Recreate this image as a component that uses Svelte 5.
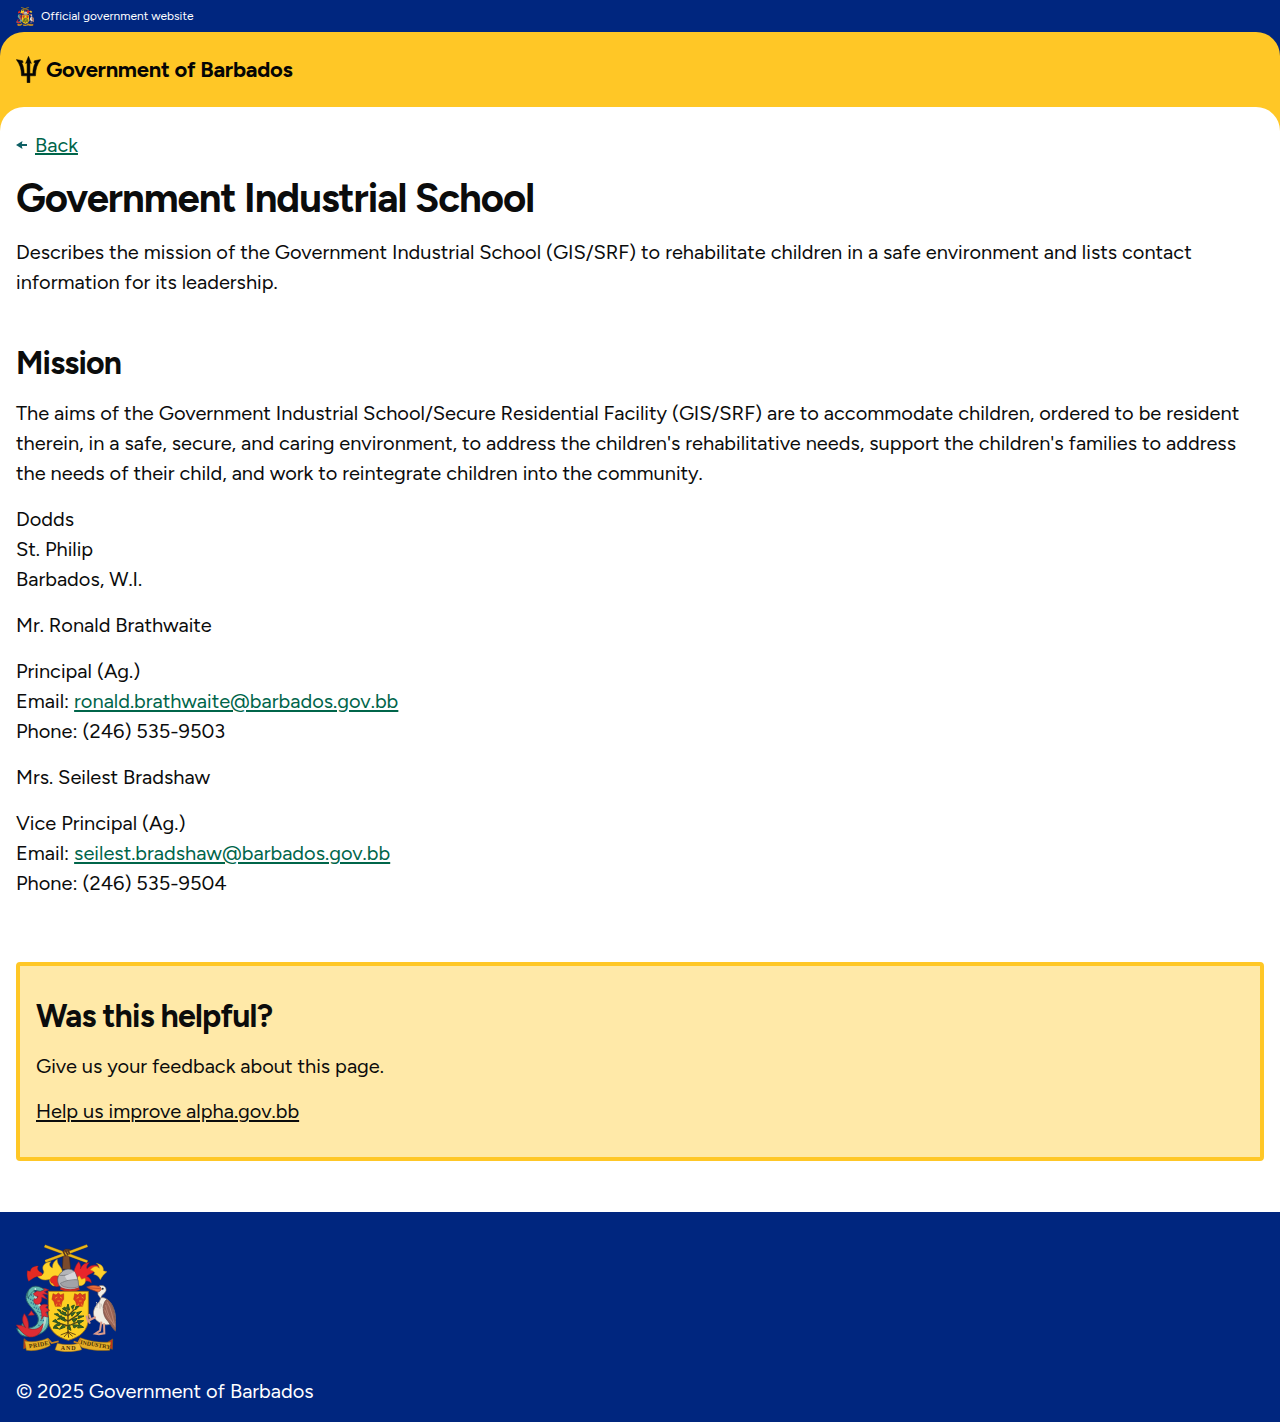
<script>
  const people = [
    {
      name: 'Mr. Ronald Brathwaite',
      role: 'Principal (Ag.)',
      email: 'ronald.brathwaite@barbados.gov.bb',
      phone: '(246) 535-9503',
    },
    {
      name: 'Mrs. Seilest Bradshaw',
      role: 'Vice Principal (Ag.)',
      email: 'seilest.bradshaw@barbados.gov.bb',
      phone: '(246) 535-9504',
    },
  ];
</script>

{#snippet crest(size)}
  <svg class="crest {size}" viewBox="24 24 300 324" preserveAspectRatio="none" role="img" aria-label="Coat of arms of Barbados">
    <!-- crossed sugar canes held by a raised arm -->
    <path d="M165 62c-3-12 0-21 9-23l12 1c4 9 2 17-2 22l4 38h-25z" fill="#7a4a2c" stroke="#3d2415" stroke-width="2" />
    <path d="M110 30l128 47M112 76l126-47" stroke="#8f6a10" stroke-width="9" />
    <path d="M110 30l128 47M112 76l126-47" stroke="#e9b71c" stroke-width="6.500" />
    <path d="M165 45l8 16M172 42l8 16M180 42l5 13" stroke="#5b3620" stroke-width="5" />
    <!-- mantling -->
    <path d="M158 141c-13 17-36 9-33-11-16 5-31 1-40-14 15 4 25-1 22-11-8-14 3-27 22-28-8 7-4 16 5 19-2-11 5-21 14-26-2 13 9 20 13 30 6 14 4 30-3 41z" fill="#ffd329" stroke="#b88812" stroke-width="1.500" />
    <path d="M62 136c-6-12-5-23-4-32l9 2c1-9 8-16 24-16-6 8-1 15 9 20 6 4 3 9-4 10-13 1-21 6-34 16zM126 131c4-12 16-14 24-10l8 26c-11 10-22 3-23-5-5 1-8-5-9-11z" fill="#e52a22" stroke="#9b1716" stroke-width="1" />
    <path d="M197 111c3-16 8-26 15-34 6 8 7 15 5 22 6-13 13-19 27-19-8 8-9 13-7 18 10-11 24-13 36-8-9 5-8 15-19 20-8 4-15 7-18 11 8 3 14 10 14 20-9-7-15-8-22-2-7 9-16 8-20-1z" fill="#e9252b" stroke="#9d1720" stroke-width="1.500" />
    <path d="M247 102c8-11 19-14 27-5-1-6-3-11-9-15 16 3 23 12 21 22l11 3c-8 6-15 14-20 24-5-9-10-14-20-16 4-5 5-8-10-13zM206 145c-2-15 3-24 8-26l7 11 10-4c5 12-3 25-17 23z" fill="#ffd02a" stroke="#b88812" stroke-width="1.300" />
    <!-- helmet -->
    <path d="M153 148c-9-18-2-31 8-40 16-15 36-9 42 5 9 16 6 32 10 42-17 10-35 9-49 5z" fill="#b4b5b9" stroke="#55565d" stroke-width="2" />
    <path d="M155 118c17 2 31-1 46-8M157 142c18-9 33-13 53-10l2 20c-19 6-33 4-49-2z" fill="#a2a3a8" stroke="#6f7076" stroke-width="2" />
    <path d="M170 120l30-13 7 21-30 4z" fill="#d7d7da" />
    <path d="M157 157c19 8 40 8 57 1" fill="none" stroke="#c62722" stroke-width="7" />
    <!-- shield -->
    <path d="M121 166h120v81c0 36-24 56-60 66-36-10-60-30-60-66z" fill="#fcd022" stroke="#a9730c" stroke-width="2.500" />
    <path d="M135 173l9 4 7-6 7 6 9-4v17l-5 7-3 14h-17l-4-14-6-7zM200 173l9 4 7-6 7 6 9-4v17l-5 7-3 14h-17l-4-14-6-7z" fill="#dc3b1f" stroke="#a8330f" stroke-width="1.500" />
    <path d="M141 187l7-4M156 183l6 4M148 195h8M206 187l7-4M221 183l6 4M213 195h8" stroke="#f2a91e" stroke-width="2.500" />
    <path d="M147 203l-4 9M155 203l5 9M212 203l-4 9M220 203l4 9" stroke="#ef8d18" stroke-width="3" />
    <!-- bearded fig tree -->
    <path d="M180 214v78M180 270l-31-10M180 256l-26-17M180 241l-18-16M180 270l34-14M180 256l31-20M180 240l20-20" fill="none" stroke="#504318" stroke-width="4" />
    <path d="M180 288l-22 9M180 289l-12 14M180 289l2 16M180 289l14 12M180 287l23 9" fill="none" stroke="#4a2b10" stroke-width="2.500" />
    <path d="M180 204l-5 14 10 4zM171 213l-8 5 14 9zM190 211l9-4-5 13zM203 212l10-1-11 11zM157 222l-9-1 13 12zM150 233l-11 1 16 9zM160 239l-12 11 17-2zM143 250l-9 6 17 5zM153 258l-16 14 20-5zM144 271l-9 5 17 2zM165 266l-11 14 18-7zM188 233l14-5-10 13zM206 230l15-4-12 12zM211 240l17 0-17 8zM192 250l16-3-10 13zM208 254l19 0-15 10zM194 266l18 2-14 8zM213 265l14 9-18 2zM168 243l-9 7 13 6zM173 229l-15 3 15 7zM184 266l5 17-11-6z" fill="#376129" stroke="#2c531f" stroke-width="3" stroke-linejoin="round" />
    <!-- dolphin supporter -->
    <path d="M74 154c-19 10-25 30-15 46 10 17 31 31 32 48 1 21-18 30-38 28l-10-14c-3 7-2 13 0 19l-17-4c6 17 17 26 37 24 35-2 63-18 59-53-3-30-35-40-31-60z" fill="#67bcb3" stroke="#28646b" stroke-width="3" />
    <path d="M82 178c-2 25 29 39 30 68 0 19-11 37-32 43" fill="none" stroke="#b9d6cd" stroke-width="7" />
    <path d="M63 172l14 9M60 186l16 8M68 200l16 7M77 213l16 7M88 225l13 7M97 238l15 4M97 253l14 1M91 267l12 5" stroke="#336e91" stroke-width="4" stroke-dasharray="4 3" />
    <path d="M86 166c10-9 22-12 36-4l-13 5 11 8-16-1 14 16-17-6c2 13-5 22-15 21-8-2-11-9-7-17 6 3 9 0 11-7-7 0-11-2-14-8zM95 213c6-9 15-10 26-5l-8 6 12 9-12 6 7 14-14-3-5 10c2-12 0-25-6-37zM70 224l-9 14 18-1z" fill="#e32d35" stroke="#93202d" stroke-width="2" />
    <path d="M60 186c-4-17 2-29 14-34 10-4 26 0 35 9l-12 5-17-3c-8 3-12 12-20 23z" fill="#5fb6ad" stroke="#254f59" stroke-width="2" />
    <circle cx="82" cy="159" r="2.500" fill="#fff" />
    <path d="M65 303c-14-3-28-18-40-36 13 0 23 3 28 8-10-14-12-29-4-42 11 14 14 30 12 44 17 7 33 2 44-14-2 27-18 41-40 40z" fill="#df2c34" stroke="#90202c" stroke-width="2" />
    <!-- pelican supporter -->
    <path d="M273 150c13-5 23 3 21 14-2 8-13 11-15 21 17-3 36 17 42 46 3 19 4 35 2 54-9-7-12-14-15-22-9 6-25 4-35-4-14-9-20-24-15-38 3-13 18-21 20-34-3-3-5-7-8-11 0-10-4-18 3-26z" fill="#f2eee4" stroke="#85756b" stroke-width="2" />
    <path d="M236 153c14-6 28-6 41 0l3 7c-5 8-10 9-16 6-10-4-22-7-28-13z" fill="#ee713a" stroke="#9c3b27" stroke-width="2" />
    <path d="M239 155l38 3" stroke="#ad3e2d" stroke-width="2" />
    <circle cx="284" cy="158" r="3" fill="#252833" />
    <path d="M295 191c18 3 30 39 28 94-14-14-19-25-30-38-9-14-11-44 2-56z" fill="#9b6555" stroke="#6b443b" stroke-width="2" />
    <path d="M297 197c13 20 16 48 24 75M293 207c6 28 13 40 25 60M290 221c9 25 16 31 24 38" fill="none" stroke="#c08c78" stroke-width="2.500" />
    <path d="M265 198c5 6 0 12 2 18M273 198c5 8 2 14 3 20M279 203c3 5 2 9 6 14" fill="none" stroke="#c8beb4" stroke-width="3" />
    <path d="M280 257l-4 27-14 9 11 2 16-3-1-30M263 243l-23 12-5-16M249 251l-6-17M242 255l4 8" fill="none" stroke="#d99a8a" stroke-width="6" />
    <!-- motto scroll -->
    <path d="M48 308l15 11-5 15-11 4zM314 309l-15 10 4 16 10 5z" fill="#c92c22" stroke="#8a6010" stroke-width="2" />
    <path d="M50 315c22 4 46 2 70-9l7 22c-7 5-11 6-14 7-19 7-38 11-58 8zM309 318c-33 3-61-2-93-13l-8 18 15 12c27 8 52 10 82 8z" fill="#e6ae26" stroke="#94640d" stroke-width="1.500" />
    <path d="M120 308l11 13 21-5M219 307l-9 14-13-4" fill="none" stroke="#c9821d" stroke-width="5" />
    <path d="M148 322c20 5 45 5 66 0l7 19c-28 8-57 8-80 0z" fill="#f0bb34" stroke="#94640d" stroke-width="1.500" />
    <g class="motto">
      <text x="64" y="337" transform="rotate(-10 64 337)" textLength="59">PRIDE</text>
      <text x="158" y="342" textLength="45">AND</text>
      <text x="216" y="324" transform="rotate(10 216 324)" textLength="92">INDUSTRY</text>
    </g>
  </svg>
{/snippet}

<div class="official">
  {@render crest('small')}
  <span>Official government website</span>
</div>

<div class="band">
  <header>
    <svg class="trident" viewBox="0 0 25 27" aria-hidden="true">
      <path d="M12.500.3 9.600 7.400l1.500-.6v10.800H8.200C8.100 12.800 7.200 9.500 5.700 6.700l1.500-.3L6.500 4.700.3 3.600c3.500 4.400 5.200 9.300 5.200 16.200h5.600v6.900h2.800v-6.900h5.600c0-6.900 1.700-11.800 5.200-16.200l-6.200 1.100-.7 1.700 1.500.3c-1.500 2.800-2.400 6.100-2.500 10.900h-2.900V6.800l1.500.6z" fill="#050505" stroke="#050505" stroke-width="0.500" />
    </svg>
    <strong>Government of Barbados</strong>
  </header>
</div>

<div class="sheet">
  <main>
    <a class="back" href="#top">
      <svg viewBox="0 0 12 10" aria-hidden="true">
        <path d="M0 5 6.500 1 5.800 4H11v2H5.800l.7 3z" fill="#0e5f64" />
      </svg>
      <span>Back</span>
    </a>

    <h1>Government Industrial School</h1>
    <p>
      Describes the mission of the Government Industrial School (GIS/SRF) to rehabilitate children in a safe
      environment and lists contact information for its leadership.
    </p>

    <h2>Mission</h2>
    <p>
      The aims of the Government Industrial School/Secure Residential Facility (GIS/SRF) are to accommodate
      children, ordered to be resident therein, in a safe, secure, and caring environment, to address the
      children's rehabilitative needs, support the children's families to address the needs of their child,
      and work to reintegrate children into the community.
    </p>
    <p>Dodds<br />St. Philip<br />Barbados, W.I.</p>
    {#each people as person}
      <p>{person.name}</p>
      <p>
        {person.role}<br />
        Email: <a href="mailto:{person.email}">{person.email}</a><br />
        Phone: {person.phone}
      </p>
    {/each}

    <section class="helpful">
      <h2>Was this helpful?</h2>
      <p>Give us your feedback about this page.</p>
      <p><a href="#feedback">Help us improve alpha.gov.bb</a></p>
    </section>
  </main>
</div>

<footer>
  {@render crest('large')}
  <p>© 2025 Government of Barbados</p>
</footer>

<style>
  :global(body) {
    background: #fff;
    color: #0b0c0c;
    font: 400 20px/30px Figtree, Lato, sans-serif;
  }

  .official {
    display: flex;
    align-items: center;
    gap: 7px;
    height: 32px;
    padding: 0 16px;
    background: #00267f;
    color: #fff;
    font-size: 12px;
    line-height: 18px;
  }

  .crest {
    display: block;
    flex: none;
  }
  .crest.small {
    width: 18px;
    height: 19px;
  }
  .crest.large {
    width: 100px;
    height: 108px;
  }
  .motto {
    fill: #493006;
    font: 700 18px 'Liberation Serif', serif;
  }

  .band {
    background: #00267f;
  }
  header {
    display: flex;
    align-items: center;
    gap: 5px;
    height: 75px;
    box-sizing: border-box;
    padding: 0 16px;
    border-radius: 24px 24px 0 0;
    background: #ffc726;
    color: #050505;
  }
  .trident {
    width: 25px;
    height: 27px;
  }
  header strong {
    font-size: 22px;
    letter-spacing: -0.28px;
  }

  .sheet {
    background: linear-gradient(#ffc726 24px, #fff 24px);
  }
  main {
    padding: 23px 16px 51px;
    border-radius: 24px 24px 0 0;
    background: #fff;
  }

  a {
    color: #00654a;
    text-decoration: underline 2px;
    text-underline-offset: 2px;
  }
  .back {
    display: flex;
    align-items: center;
    gap: 7px;
    width: max-content;
    text-decoration: none;
  }
  .back svg {
    width: 12px;
    height: 10px;
  }
  .back span {
    text-decoration: underline 2px;
    text-underline-offset: 1px;
  }

  h1,
  h2,
  p {
    margin: 0;
  }
  h1 {
    margin: 15px 0 16px;
    font-size: 40px;
    line-height: 46px;
    letter-spacing: -0.025em;
  }
  h2 {
    margin: 46px 0 15px;
    font-size: 32px;
    line-height: 40px;
    letter-spacing: -0.025em;
  }
  p + p {
    margin-top: 16px;
  }

  .helpful {
    margin-top: 64px;
    padding: 30px 16px 31px;
    border: 4px solid #ffc726;
    border-radius: 4px;
    background: #ffe9a8;
  }
  .helpful h2 {
    margin: 0 0 15px;
  }
  .helpful p + p {
    margin-top: 15px;
  }
  .helpful a {
    color: #0b0c0c;
  }

  footer {
    padding: 32px 16px 16px;
    background: #00267f;
    color: #fff;
  }
  footer p {
    margin-top: 24px;
  }
</style>
